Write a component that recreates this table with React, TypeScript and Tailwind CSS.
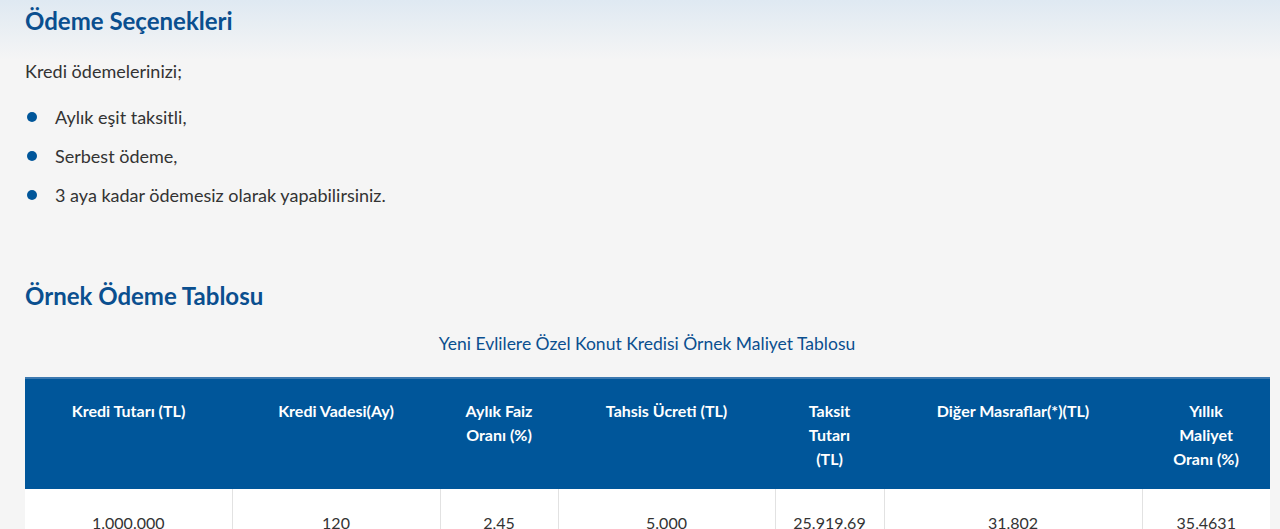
import React from 'react';

const headers = [
  'Kredi Tutarı (TL)',
  'Kredi Vadesi(Ay)',
  'Aylık Faiz Oranı (%)',
  'Tahsis Ücreti (TL)',
  'Taksit Tutarı (TL)',
  'Diğer Masraflar(*)(TL)',
  'Yıllık Maliyet Oranı (%)',
];

const values = ['1.000.000', '120', '2,45', '5.000', '25.919,69', '31.802', '35,4631'];

const widths = ['w-[207px]', 'w-[208px]', 'w-[118px]', 'w-[217px]', 'w-[109px]', 'w-[258px]', 'w-[128px]'];

const headerPad = ['px-2', 'px-2', 'px-[20px]', 'px-2', 'px-[24px]', 'px-2', 'px-[26px]'];

const bullets = ['Aylık eşit taksitli,', 'Serbest ödeme,', '3 aya kadar ödemesiz olarak yapabilirsiniz.'];

const App: React.FC = () => {
  return (
    <div
      className="min-h-[529px] bg-[#f5f5f5] bg-gradient-to-b from-[#dfe9f2] to-[#f5f5f5] bg-[length:100%_60px] bg-no-repeat text-[#333]"
      style={{ fontFamily: "'Lato', 'Noto Sans', sans-serif" }}
    >
      <div className="px-[25px]">
        <h2 className="pt-[5px] text-[24px] font-bold leading-[32px] text-[#0a4f8f]">Ödeme Seçenekleri</h2>

        <p className="mt-[22px] text-[18px] leading-[24px]">Kredi ödemelerinizi;</p>

        <ul className="mt-[22px] flex flex-col gap-[15px]">
          {bullets.map((b) => (
            <li key={b} className="flex items-center text-[18px] leading-[24px]">
              <span className="ml-[2px] mr-[18px] h-[10px] w-[10px] rounded-full bg-[#00569a]" />
              {b}
            </li>
          ))}
        </ul>

        <h2 className="mt-[73px] text-[24px] font-bold leading-[32px] text-[#0a4f8f]">Örnek Ödeme Tablosu</h2>

        <p className="mt-[20px] pl-[14px] text-center text-[17.5px] leading-[24px] text-[#0a4f8f]">
          Yeni Evlilere Özel Konut Kredisi Örnek Maliyet Tablosu
        </p>

        <table className="mt-[21px] w-[1245px] table-fixed border-collapse">
          <thead>
            <tr className="border-t-2 border-[#3d79b0] bg-[#00569a]">
              {headers.map((h, i) => (
                <th
                  key={h}
                  className={`${widths[i]} ${headerPad[i]} h-[111px] pt-[20px] pb-[18px] align-top text-[16px] font-bold leading-[24px] text-white`}
                >
                  {h}
                </th>
              ))}
            </tr>
          </thead>
          <tbody>
            <tr className="bg-white">
              {values.map((v, i) => (
                <td
                  key={i}
                  className="border-l border-[#e2e2e2] pt-[22px] pb-[22px] text-center text-[16px] leading-[24px] text-[#333] first:border-l-0"
                >
                  {v}
                </td>
              ))}
            </tr>
          </tbody>
        </table>
      </div>
    </div>
  );
};

export default App;
